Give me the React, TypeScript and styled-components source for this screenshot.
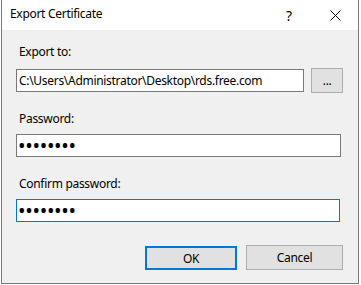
import React from 'react';
import styled, { createGlobalStyle } from 'styled-components';

const GlobalStyle = createGlobalStyle`
  html, body {
    margin: 0;
    padding: 0;
    background: #ffffff;
  }
  body {
    font-family: "Noto Sans", "Liberation Sans", sans-serif;
    font-size: 12px;
    letter-spacing: -0.3px;
    color: #000;
  }
`;

const Window = styled.div`
  box-sizing: border-box;
  width: 358px;
  height: 284px;
  margin-left: 1px;
  border: 1px solid #7a7a7a;
  border-top: none;
  display: flex;
  flex-direction: column;
  background: #f0f0f0;
`;

const TitleBar = styled.div`
  height: 30px;
  background: #ffffff;
  display: flex;
  align-items: center;
  padding-left: 8px;
`;

const Title = styled.div`
  flex: 1;
  font-size: 12px;
  line-height: 16px;
  margin-top: -2px;
`;

const CaptionButton = styled.div`
  width: 46px;
  height: 30px;
  display: flex;
  align-items: center;
  justify-content: center;
  font-size: 14px;
  color: #000;
`;

const Body = styled.div`
  flex: 1;
  padding: 14px 15px 0 14px;
  display: flex;
  flex-direction: column;
`;

const Label = styled.div<{ $gap: number }>`
  margin: ${(p) => p.$gap}px 0 0 3px;
  height: 16px;
  line-height: 16px;
  font-size: 12px;
`;

const FieldRow = styled.div`
  margin-top: 8px;
  display: flex;
  align-items: flex-start;
  gap: 7px;
`;

const TextBox = styled.input<{ $width: number; $gap?: number; $focused?: boolean }>`
  box-sizing: border-box;
  width: ${(p) => p.$width}px;
  height: 23px;
  margin: ${(p) => p.$gap ?? 0}px 0 0 0;
  padding: 0 2px;
  border: 1px solid ${(p) => (p.$focused ? '#0078d7' : '#7a7a7a')};
  background: #ffffff;
  font-family: "Noto Sans", "Liberation Sans", sans-serif;
  font-size: 12px;
  letter-spacing: -0.3px;
  color: #000;
  outline: none;

  &[type='password'] {
    padding: 0 1px;
    font-size: 20px;
    letter-spacing: -0.3px;
  }
`;

const Button = styled.button<{ $width: number; $default?: boolean }>`
  box-sizing: border-box;
  width: ${(p) => p.$width}px;
  height: ${(p) => (p.$default ? 24 : 25)}px;
  margin-top: ${(p) => (p.$default ? 1 : 0)}px;
  padding: 0;
  background: #e1e1e1;
  border: ${(p) => (p.$default ? '2px solid #0078d7' : '1px solid #adadad')};
  font-family: "Noto Sans", "Liberation Sans", sans-serif;
  font-size: 12px;
  letter-spacing: -0.3px;
  color: #000;
`;

const ButtonRow = styled.div`
  margin-top: 23px;
  display: flex;
  justify-content: flex-end;
  gap: 9px;
`;

const CloseIcon = () => (
  <svg width="11" height="11" viewBox="0 0 11 11">
    <path d="M0.5 0.5 L10.5 10.5 M10.5 0.5 L0.5 10.5" stroke="#000" strokeWidth="1" fill="none" />
  </svg>
);

export default function App() {
  return (
    <>
      <GlobalStyle />
      <Window>
        <TitleBar>
          <Title>Export Certificate</Title>
          <CaptionButton>?</CaptionButton>
          <CaptionButton>
            <CloseIcon />
          </CaptionButton>
        </TitleBar>
        <Body>
          <Label $gap={0}>Export to:</Label>
          <FieldRow>
            <TextBox
              $width={290}
              $gap={1}
              readOnly
              value="C:\Users\Administrator\Desktop\rds.free.com"
            />
            <Button $width={32}>...</Button>
          </FieldRow>
          <Label $gap={18}>Password:</Label>
          <TextBox $width={325} $gap={7} type="password" readOnly value="password" />
          <Label $gap={19}>Confirm password:</Label>
          <TextBox $width={324} $gap={7} $focused type="password" readOnly value="password" />
          <ButtonRow>
            <Button $width={92} $default>
              OK
            </Button>
            <Button $width={97}>Cancel</Button>
          </ButtonRow>
        </Body>
      </Window>
    </>
  );
}
